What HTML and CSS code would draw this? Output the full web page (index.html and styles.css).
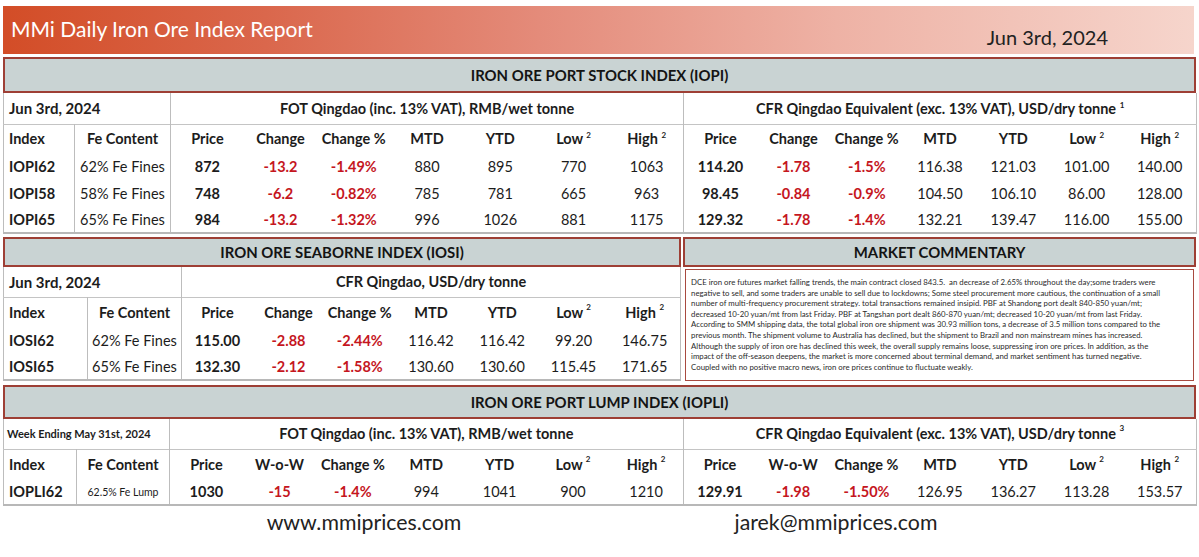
FILE: index.html
```html
<!DOCTYPE html>
<html lang="en">
<head>
<meta charset="utf-8">
<title>MMi Daily Iron Ore Index Report</title>
<link rel="stylesheet" href="styles.css">
</head>
<body>
<div class="page">
  <header class="banner">
    <span class="banner-title">MMi Daily Iron Ore Index Report</span>
    <span class="banner-date">Jun 3rd, 2024</span>
  </header>

  <section class="block block-iopi">
    <div class="bar bar-iopi">IRON ORE PORT STOCK INDEX (IOPI)</div>
    <table class="grid grid-wide">
      <colgroup><col class="w-idx"><col class="w-fe"><col span="14" class="w-num"></colgroup>
      <tr class="r-sub">
        <td colspan="2" class="c-date">Jun 3rd, 2024</td>
        <td colspan="7" class="c-div c-subhead">FOT Qingdao (inc. 13% VAT), RMB/wet tonne</td>
        <td colspan="7" class="c-div c-subhead">CFR Qingdao Equivalent (exc. 13% VAT), USD/dry tonne <sup class="fn">1</sup></td>
      </tr>
      <tr class="r-head">
        <th class="c-idx">Index</th><th class="c-fe">Fe Content</th>
        <th class="c-div">Price</th><th>Change</th><th>Change %</th><th>MTD</th><th>YTD</th><th>Low <sup class="fn">2</sup></th><th>High <sup class="fn">2</sup></th>
        <th class="c-div">Price</th><th>Change</th><th>Change %</th><th>MTD</th><th>YTD</th><th>Low <sup class="fn">2</sup></th><th>High <sup class="fn">2</sup></th>
      </tr>
      <tr class="r-data">
        <td class="c-idx">IOPI62</td><td class="c-fe">62% Fe Fines</td>
        <td class="c-div c-price">872</td><td class="c-neg">-13.2</td><td class="c-neg">-1.49%</td><td>880</td><td>895</td><td>770</td><td>1063</td>
        <td class="c-div c-price">114.20</td><td class="c-neg">-1.78</td><td class="c-neg">-1.5%</td><td>116.38</td><td>121.03</td><td>101.00</td><td>140.00</td>
      </tr>
      <tr class="r-data">
        <td class="c-idx">IOPI58</td><td class="c-fe">58% Fe Fines</td>
        <td class="c-div c-price">748</td><td class="c-neg">-6.2</td><td class="c-neg">-0.82%</td><td>785</td><td>781</td><td>665</td><td>963</td>
        <td class="c-div c-price">98.45</td><td class="c-neg">-0.84</td><td class="c-neg">-0.9%</td><td>104.50</td><td>106.10</td><td>86.00</td><td>128.00</td>
      </tr>
      <tr class="r-data r-last">
        <td class="c-idx">IOPI65</td><td class="c-fe">65% Fe Fines</td>
        <td class="c-div c-price">984</td><td class="c-neg">-13.2</td><td class="c-neg">-1.32%</td><td>996</td><td>1026</td><td>881</td><td>1175</td>
        <td class="c-div c-price">129.32</td><td class="c-neg">-1.78</td><td class="c-neg">-1.4%</td><td>132.21</td><td>139.47</td><td>116.00</td><td>155.00</td>
      </tr>
    </table>
  </section>

  <div class="mid">
    <section class="block block-iosi">
      <div class="bar bar-iosi">IRON ORE SEABORNE INDEX (IOSI)</div>
      <table class="grid grid-iosi">
        <colgroup><col class="w-idx2"><col class="w-fe2"><col span="7" class="w-num2"></colgroup>
        <tr class="r-sub r-sub2">
          <td colspan="2" class="c-date">Jun 3rd, 2024</td>
          <td colspan="7" class="c-div c-subhead">CFR Qingdao, USD/dry tonne</td>
        </tr>
        <tr class="r-head r-head2">
          <th class="c-idx">Index</th><th class="c-fe">Fe Content</th>
          <th class="c-div">Price</th><th>Change</th><th>Change %</th><th>MTD</th><th>YTD</th><th>Low <sup class="fn fn-hi">2</sup></th><th>High <sup class="fn fn-hi">2</sup></th>
        </tr>
        <tr class="r-data">
          <td class="c-idx">IOSI62</td><td class="c-fe">62% Fe Fines</td>
          <td class="c-div c-price">115.00</td><td class="c-neg">-2.88</td><td class="c-neg">-2.44%</td><td>116.42</td><td>116.42</td><td>99.20</td><td>146.75</td>
        </tr>
        <tr class="r-data r-last">
          <td class="c-idx">IOSI65</td><td class="c-fe">65% Fe Fines</td>
          <td class="c-div c-price">132.30</td><td class="c-neg">-2.12</td><td class="c-neg">-1.58%</td><td>130.60</td><td>130.60</td><td>115.45</td><td>171.65</td>
        </tr>
      </table>
    </section>
    <section class="commentary">
      <div class="bar bar-iosi">MARKET COMMENTARY</div>
      <div class="comment-text">DCE iron ore futures market falling trends, the main contract closed 843.5.&nbsp; an decrease of 2.65% throughout the day;some traders were<br>negative to sell, and some traders are unable to sell due to lockdowns; Some steel procurement more cautious, the continuation of a small<br>number of multi-frequency procurement strategy. total transactions remained insipid. PBF at Shandong port dealt 840-850 yuan/mt;<br>decreased 10-20 yuan/mt from last Friday. PBF at Tangshan port dealt 860-870 yuan/mt; decreased 10-20 yuan/mt from last Friday.<br>According to SMM shipping data, the total global iron ore shipment was 30.93 million tons, a decrease of 3.5 million tons compared to the<br>previous month. The shipment volume to Australia has declined, but the shipment to Brazil and non mainstream mines has increased.<br>Although the supply of iron ore has declined this week, the overall supply remains loose, suppressing iron ore prices. In addition, as the<br>impact of the off-season deepens, the market is more concerned about terminal demand, and market sentiment has turned negative.<br>Coupled with no positive macro news, iron ore prices continue to fluctuate weakly.</div>
    </section>
  </div>

  <section class="block block-iopli">
    <div class="bar bar-iopli">IRON ORE PORT LUMP INDEX (IOPLI)</div>
    <table class="grid grid-wide grid-lump">
      <colgroup><col class="w-idx3"><col class="w-fe3"><col span="14" class="w-num3"></colgroup>
      <tr class="r-sub r-sub2">
        <td colspan="2" class="c-date c-week">Week Ending May 31st, 2024</td>
        <td colspan="7" class="c-div c-subhead">FOT Qingdao (inc. 13% VAT), RMB/wet tonne</td>
        <td colspan="7" class="c-div c-subhead">CFR Qingdao Equivalent (exc. 13% VAT), USD/dry tonne <sup class="fn fn-hi">3</sup></td>
      </tr>
      <tr class="r-head r-head2">
        <th class="c-idx">Index</th><th class="c-fe">Fe Content</th>
        <th class="c-div">Price</th><th>W-o-W</th><th>Change %</th><th>MTD</th><th>YTD</th><th>Low <sup class="fn fn-hi">2</sup></th><th>High <sup class="fn fn-hi">2</sup></th>
        <th class="c-div">Price</th><th>W-o-W</th><th>Change %</th><th>MTD</th><th>YTD</th><th>Low <sup class="fn fn-hi">2</sup></th><th>High <sup class="fn fn-hi">2</sup></th>
      </tr>
      <tr class="r-data r-last">
        <td class="c-idx">IOPLI62</td><td class="c-fe c-small">62.5% Fe Lump</td>
        <td class="c-div c-price">1030</td><td class="c-neg">-15</td><td class="c-neg">-1.4%</td><td>994</td><td>1041</td><td>900</td><td>1210</td>
        <td class="c-div c-price">129.91</td><td class="c-neg">-1.98</td><td class="c-neg">-1.50%</td><td>126.95</td><td>136.27</td><td>113.28</td><td>153.57</td>
      </tr>
    </table>
  </section>

  <footer class="footer">
    <span class="footer-item">www.mmiprices.com</span>
    <span class="footer-item">jarek@mmiprices.com</span>
  </footer>
</div>
</body>
</html>
```

FILE: styles.css
```css
* { box-sizing: border-box; }

body {
  margin: 0;
  background: #ffffff;
  font-family: Lato, "Open Sans", "Liberation Sans", sans-serif;
  color: #1c1c1c;
}

.page {
  width: 1199px;
  padding: 6px 3px 0 3px;
}

/* banner */
.banner {
  display: flex;
  justify-content: space-between;
  height: 48px;
  width: 1191px;
  background: linear-gradient(90deg, #d34d27 0%, #da674c 22%, #e48b7a 45%, #eeb2a5 70%, #f6d5cc 100%);
}
.banner-title {
  align-self: center;
  padding-left: 8px;
  padding-bottom: 3px;
  font-size: 21px;
  color: #ffffff;
}
.banner-date {
  align-self: flex-end;
  padding-right: 86px;
  padding-bottom: 5px;
  font-size: 20px;
  color: #222222;
}

/* section bars */
.block { margin-top: 3px; }
.block-iopli { margin-top: 4px; }

.bar {
  display: flex;
  align-items: center;
  justify-content: center;
  background: #c9d3d3;
  border: 2px solid #9e3f35;
  font-weight: 700;
  font-size: 14.9px;
  color: #141414;
}
.bar-iopi { height: 36px; }
.bar-iosi { height: 30px; }
.bar-iopli { height: 34px; }

/* tables */
.grid {
  border-collapse: collapse;
  table-layout: fixed;
  font-size: 14.5px;
  border-left: 1px solid #bdbdbd;
  border-right: 1px solid #bdbdbd;
  border-bottom: 2px solid #b8b8b8;
}
.grid-wide { width: 1193px; }
.grid-iosi { width: 677px; }

.w-idx { width: 71px; }
.w-fe { width: 96px; }
.w-num { width: 73.29px; }
.w-idx2 { width: 84px; }
.w-fe2 { width: 94px; }
.w-num2 { width: 71.29px; }
.w-idx3 { width: 73px; }
.w-fe3 { width: 93px; }
.w-num3 { width: 73.36px; }

.grid td, .grid th {
  padding: 0;
  text-align: center;
  white-space: nowrap;
  font-weight: 400;
}
.grid th { font-weight: 700; }

.r-sub { height: 31px; border-bottom: 1px solid #c4c4c4; }
.r-sub2 { height: 30px; }
.r-sub td { font-weight: 700; }
.r-head { height: 29px; }
.r-head2 { height: 30px; }
.r-data { height: 27px; }
.r-last { height: 26px; }

.c-date { text-align: left !important; padding-left: 5px !important; font-size: 15px; }
.c-week { font-size: 11px; padding-left: 3px !important; }
.c-subhead { font-size: 14.5px; }
.c-div { border-left: 1px solid #bdbdbd; }
.c-idx { text-align: left !important; padding-left: 5px !important; font-weight: 700 !important; border-right: 1px solid #bdbdbd; }
.c-fe { border-right: 1px solid #bdbdbd; }
.c-small { font-size: 10.5px; }
.c-price { font-weight: 700 !important; }
.c-neg { color: #c5161e; font-weight: 700 !important; }

.fn {
  font-size: 8px;
  font-weight: 700;
  vertical-align: 6px;
  line-height: 0;
}
.fn-hi { vertical-align: 8px; }

/* middle row */
.mid {
  display: flex;
  gap: 2px;
  margin-top: 3px;
}
.mid .block { margin-top: 0; }
.commentary {
  width: 514px;
  display: flex;
  flex-direction: column;
}
.comment-text {
  margin: 2px 2px 0 2px;
  height: 112px;
  border: 1.5px solid #a84a40;
  padding: 7px 3px 0 5px;
  font-size: 7.8px;
  line-height: 10.6px;
  white-space: nowrap;
  overflow: hidden;
  color: #2a2a2a;
}

/* footer */
.footer {
  display: grid;
  grid-template-columns: 722px 222px;
  margin-top: 4px;
  font-size: 21.3px;
  line-height: 24px;
  color: #222222;
}
.footer-item { text-align: center; white-space: nowrap; }
```
